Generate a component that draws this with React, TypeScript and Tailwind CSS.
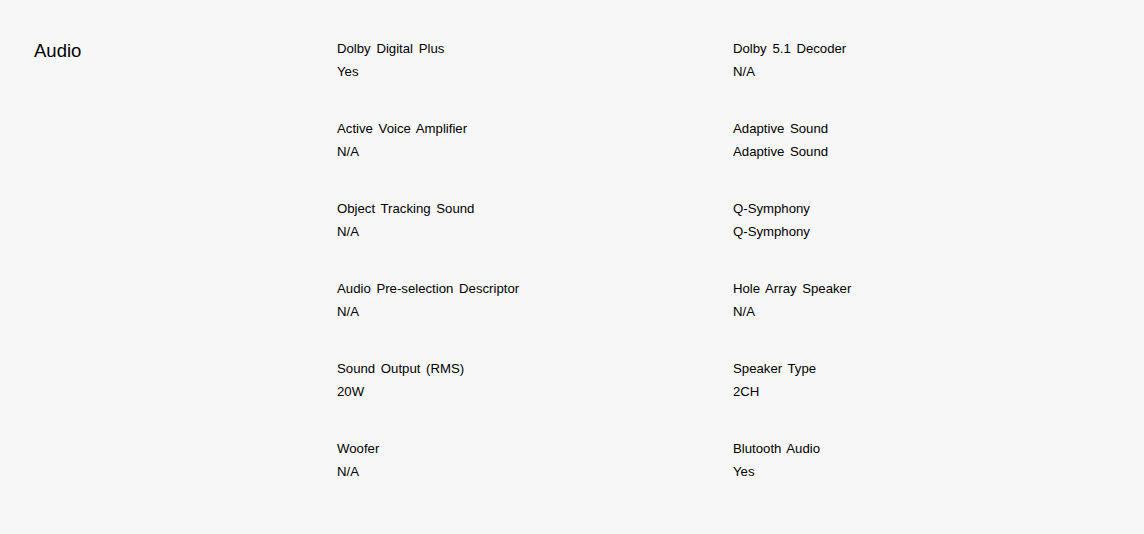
import React from 'react';

const specs: { label: string; value: string }[] = [
  { label: 'Dolby Digital Plus', value: 'Yes' },
  { label: 'Dolby 5.1 Decoder', value: 'N/A' },
  { label: 'Active Voice Amplifier', value: 'N/A' },
  { label: 'Adaptive Sound', value: 'Adaptive Sound' },
  { label: 'Object Tracking Sound', value: 'N/A' },
  { label: 'Q-Symphony', value: 'Q-Symphony' },
  { label: 'Audio Pre-selection Descriptor', value: 'N/A' },
  { label: 'Hole Array Speaker', value: 'N/A' },
  { label: 'Sound Output (RMS)', value: '20W' },
  { label: 'Speaker Type', value: '2CH' },
  { label: 'Woofer', value: 'N/A' },
  { label: 'Blutooth Audio', value: 'Yes' },
];

export default function App() {
  return (
    <div className="min-h-[534px] w-full bg-[#f7f7f7] text-black font-['Liberation_Sans',Arial,sans-serif]">
      <div className="flex pl-[34px] pt-[38px]">
        <h2 className="w-[303px] shrink-0 text-[18.5px] leading-[26px]">Audio</h2>
        <div className="grid grid-cols-[396px_396px] gap-y-[35px]">
          {specs.map((s) => (
            <div key={s.label} className="text-[13.2px] leading-[22.5px] [word-spacing:2px]">
              <p>{s.label}</p>
              <p>{s.value}</p>
            </div>
          ))}
        </div>
      </div>
    </div>
  );
}
